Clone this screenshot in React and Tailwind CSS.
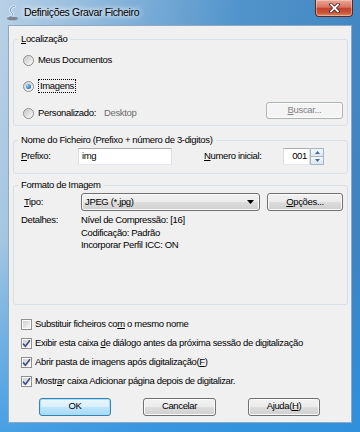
import React from "react";

// access-key underline
const U = ({ children }) => <span className="underline underline-offset-[1px]">{children}</span>;

const Radio = ({ checked, className = "", children }) => (
  <div className={`flex h-[18px] items-center ${className}`}>
    <span className="flex h-[11px] w-[11px] shrink-0 items-center justify-center rounded-full border border-[#8a8a8a] bg-[linear-gradient(135deg,#d2d2d2,#fdfdfd)]">
      {checked ? (
        <span className="h-[5px] w-[5px] rounded-full bg-[radial-gradient(circle_at_35%_35%,#9ad8ff,#1f64b8_75%)]" />
      ) : (
        <span className="h-[7px] w-[7px] rounded-full bg-[linear-gradient(135deg,#c8c8c8,#f7f7f7)]" />
      )}
    </span>
    <span className="ml-[4px] flex items-center">{children}</span>
  </div>
);

const Check = ({ checked, children }) => (
  <div className="flex h-[19px] items-center">
    <span className="flex h-[11px] w-[11px] shrink-0 items-center justify-center border border-[#8e8f8f] bg-white">
      <span className="flex h-[7px] w-[7px] items-center justify-center bg-[linear-gradient(135deg,#cfcfcf,#f6f6f6)]">
        {checked && (
          <svg width="9" height="9" viewBox="0 0 9 9" className="overflow-visible">
            <path d="M1 4.6 L3.4 7.2 L8 1.2" fill="none" stroke="#3b4f8a" strokeWidth="1.6" />
          </svg>
        )}
      </span>
    </span>
    <span className="ml-[3px]">{children}</span>
  </div>
);

const Btn = ({ kind, className = "", children }) => {
  let look =
    "border-[#707070] bg-[linear-gradient(#f2f2f2_0%,#ebebeb_48%,#dddddd_52%,#cfcfcf_100%)] shadow-[inset_0_0_0_1px_#fbfbfb]";
  if (kind === "primary")
    look =
      "border-[#3c7fb1] bg-[linear-gradient(#eaf6fd_0%,#d9f0fc_48%,#bee6fd_52%,#a7d9f5_100%)] shadow-[inset_0_0_0_1px_#9fe0fb]";
  if (kind === "disabled")
    look = "border-[#adb2b5] bg-[#f4f4f4] text-[#838383] shadow-[inset_0_0_0_1px_#fcfcfc]";
  return (
    <div className={`flex items-center justify-center rounded-[3px] border ${look} ${className}`}>
      {children}
    </div>
  );
};

const Group = ({ label, className = "", children }) => (
  <fieldset className={`rounded-[3px] border border-[#d5dfe5] ${className}`}>
    <legend className="ml-[4px] px-[3px] leading-[12px]">{label}</legend>
    {children}
  </fieldset>
);

const TitleIcon = () => (
  <svg width="13" height="16" viewBox="0 0 13 16" className="ml-[6px] mt-[5px]">
    <path d="M9 1 C4 2 3 6 6 8 C8 9.5 6 12 3 12" fill="none" stroke="#e8f3fc" strokeWidth="2.4" strokeLinecap="round" />
    <path d="M9 1 C4 2 3 6 6 8 C8 9.5 6 12 3 12" fill="none" stroke="#5d8fc4" strokeWidth="1" strokeLinecap="round" />
    <ellipse cx="6.5" cy="13.5" rx="5.5" ry="1.8" fill="#7c8591" />
  </svg>
);

const CloseButton = () => (
  <div className="ml-auto mr-[7px] flex h-[17px] w-[38px] items-center justify-center rounded-b-[4px] border border-t-0 border-[#5b2a25] bg-[linear-gradient(#eaa898_0%,#d9735f_45%,#c2432c_52%,#c8553b_80%,#e08d63_100%)] shadow-[inset_0_0_0_1px_rgba(255,220,210,0.45)]">
    <svg width="11" height="10" viewBox="0 0 11 10">
      <path d="M2 1.5 L9 8.5 M9 1.5 L2 8.5" stroke="#4a1d18" strokeWidth="3.4" strokeLinecap="square" />
      <path d="M2 1.5 L9 8.5 M9 1.5 L2 8.5" stroke="#ffffff" strokeWidth="1.8" strokeLinecap="square" />
    </svg>
  </div>
);

const Spinner = () => (
  <div className="flex h-[17px]">
    <div className="flex w-[27px] items-center justify-end border border-[#abadb3] border-b-[#e3e9ef] border-x-[#dbdfe6] bg-white pr-[2px]">
      001
    </div>
    <div className="flex w-[14px] flex-col">
      <div className="flex flex-1 items-center justify-center border border-[#a6b6c7] bg-[linear-gradient(#f3f7fb,#dce6f0)]">
        <svg width="5" height="3" viewBox="0 0 5 3"><path d="M0 3H5L2.5 0Z" fill="#4c6a8f" /></svg>
      </div>
      <div className="flex flex-1 items-center justify-center border border-t-0 border-[#a6b6c7] bg-[linear-gradient(#f3f7fb,#dce6f0)]">
        <svg width="5" height="3" viewBox="0 0 5 3"><path d="M0 0H5L2.5 3Z" fill="#4c6a8f" /></svg>
      </div>
    </div>
  </div>
);

export default function App() {
  return (
    <div className="flex h-[432px] w-[360px] flex-col overflow-hidden bg-[linear-gradient(180deg,rgba(60,150,225,0)_55%,rgba(45,150,230,0.75)_100%),linear-gradient(100deg,#b9d1e6_0%,#8ab6db_25%,#5194cb_55%,#3a80be_100%)] font-['Liberation_Sans',Arial,sans-serif] text-[9.5px] tracking-[-0.35px] text-black">
      {/* title bar */}
      <div className="flex h-[25px] shrink-0 items-start">
        <TitleIcon />
        <span className="ml-[5px] mt-[6px] text-[10.5px] leading-[13px] [text-shadow:0_0_5px_#fff,0_0_9px_#fff]">
          Definições Gravar Ficheiro
        </span>
        <CloseButton />
      </div>

      {/* client area */}
      <div className="mx-[8px] mb-[9px] flex-1 border border-[#8fa9c2] bg-[#f0f0f0] pl-[4px] pr-[3px] pt-[7px]">
        <Group label={<><U>L</U>ocalização</>}>
          <div className="pb-[3px] pl-[9px] pr-[4px] pt-[6px]">
            <Radio>Meus Documentos</Radio>
            <Radio checked className="mt-[8px]">
              <span className="border border-dotted border-black px-[1px] leading-[12px]">Imagens</span>
            </Radio>
            <div className="mt-[9px] flex items-start justify-between">
              <Radio>
                Personalizado:<span className="ml-[8px] text-[#6d6d6d]">Desktop</span>
              </Radio>
              <Btn kind="disabled" className="-mt-[2px] h-[17px] w-[77px]">
                <U>B</U>uscar...
              </Btn>
            </div>
          </div>
        </Group>

        <Group label="Nome do Ficheiro (Prefixo + número de 3-digitos)" className="mt-[8px]">
          <div className="mt-[2px] flex h-[17px] items-center pb-0 pl-[7px]">
            <span className="w-[57px]"><U>P</U>refixo:</span>
            <div className="flex h-[17px] w-[94px] items-center border border-[#abadb3] border-b-[#e3e9ef] border-x-[#dbdfe6] bg-white pl-[3px]">
              img
            </div>
            <span className="ml-[32px] w-[79px]"><U>N</U>umero inicial:</span>
            <Spinner />
          </div>
          <div className="h-[8px]" />
        </Group>

        <Group label="Formato de Imagem" className="mt-[5px]">
          <div className="pb-[52px] pl-[7px] pt-[2px]">
            <div className="flex h-[18px] items-center">
              <span className="w-[60px] pl-[3px]"><U>T</U>ipo:</span>
              <Btn className="h-[18px] w-[179px] !justify-start pl-[3px] pr-[5px]">
                <span className="flex-1">JPEG (*.jpg)</span>
                <svg width="7" height="4" viewBox="0 0 7 4"><path d="M0 0H7L3.5 4Z" fill="#000" /></svg>
              </Btn>
              <Btn className="ml-[7px] h-[18px] w-[76px]">
                <U>O</U>pções...
              </Btn>
            </div>
            <div className="mt-[3px] flex leading-[12.5px]">
              <span className="w-[60px]">Detalhes:</span>
              <div className="flex flex-col">
                <span>Nível de Compressão: [16]</span>
                <span>Codificação: Padrão</span>
                <span>Incorporar Perfil ICC: ON</span>
              </div>
            </div>
          </div>
        </Group>

        <div className="ml-[8px] mt-[10px] flex flex-col">
          <Check>Substituir ficheiros co<U>m</U> o mesmo nome</Check>
          <Check checked>Exibir esta caixa <U>d</U>e diálogo antes da próxima sessão de digitalização</Check>
          <Check checked>Abrir pasta de imagens após digitalização(<U>F</U>)</Check>
          <Check checked>Mostr<U>a</U>r caixa Adicionar página depois de digitalizar.</Check>
        </div>

        <div className="ml-[26px] mt-[7px] flex gap-[32px]">
          <Btn kind="primary" className="h-[18px] w-[72px]">OK</Btn>
          <Btn className="h-[18px] w-[73px]">Cancelar</Btn>
          <Btn className="h-[18px] w-[72px]">Ajuda(<U>H</U>)</Btn>
        </div>
      </div>
    </div>
  );
}
